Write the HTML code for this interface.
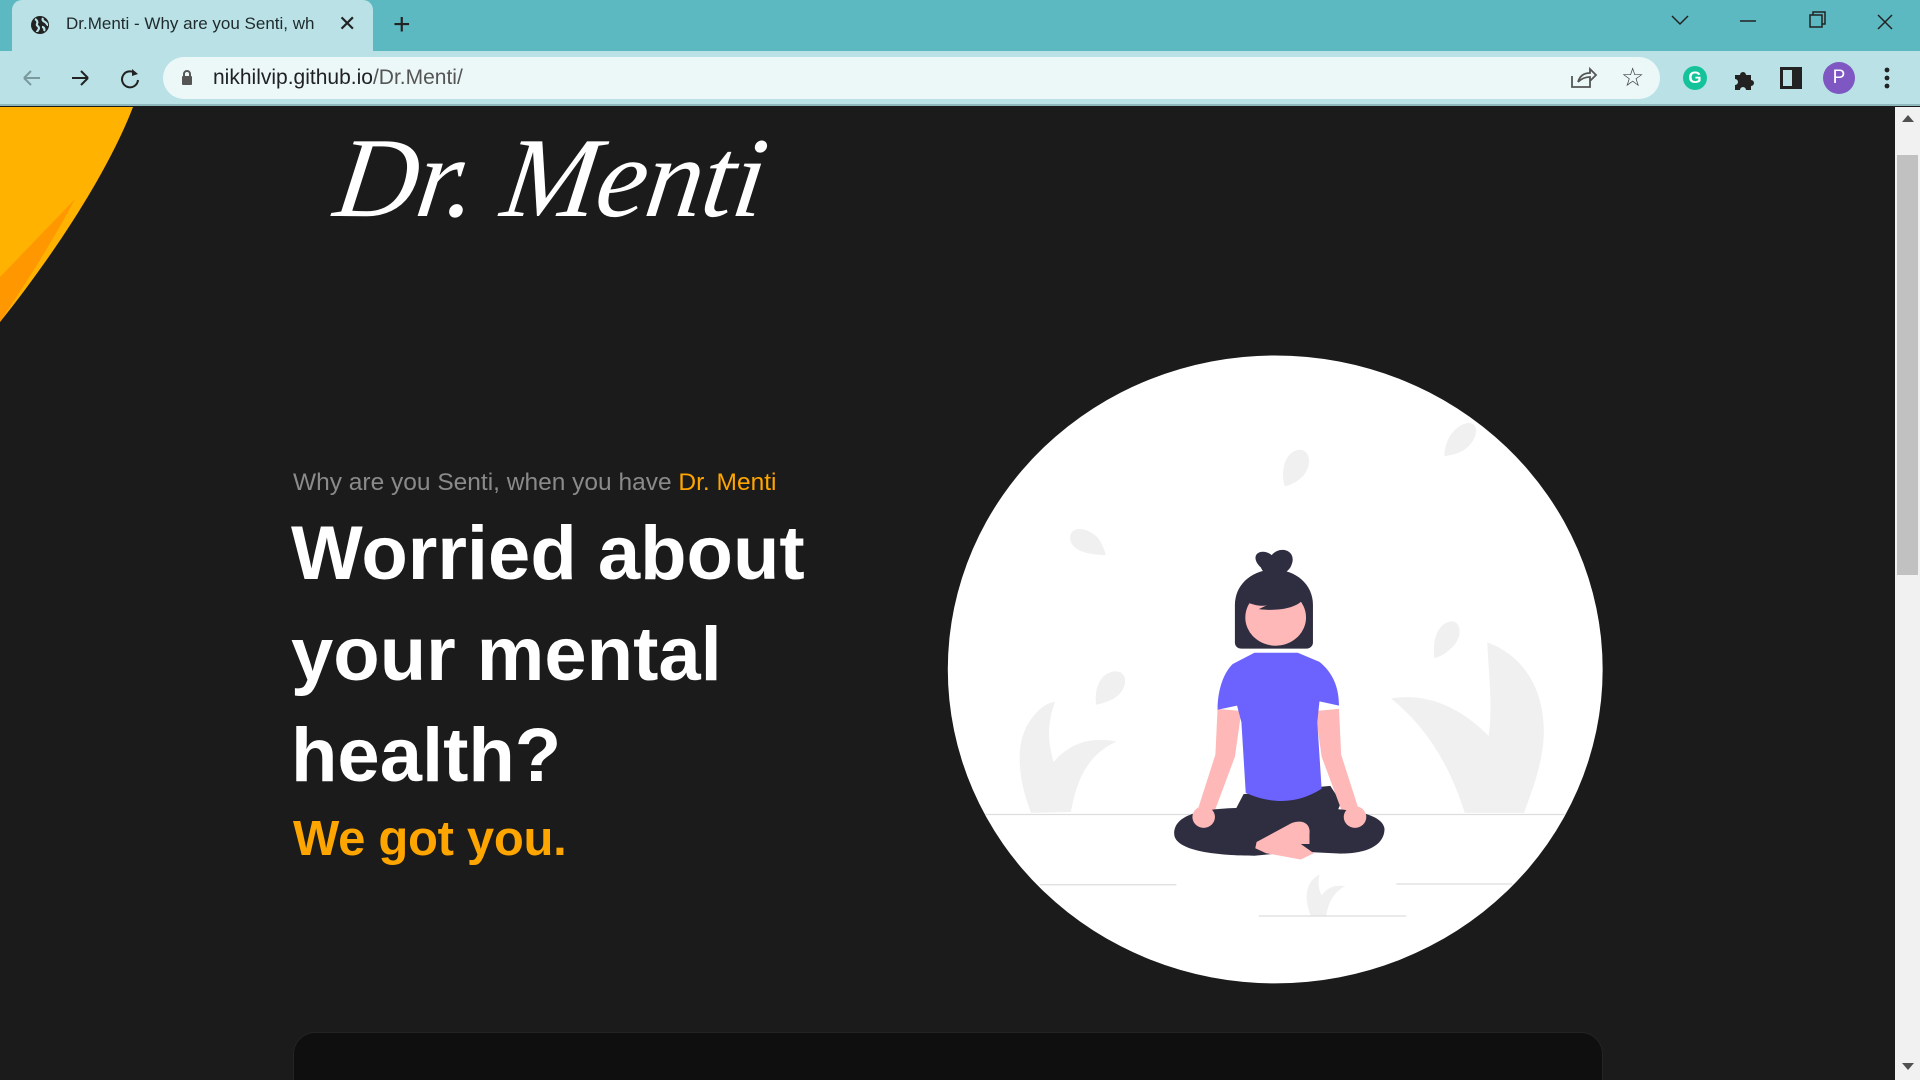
<!DOCTYPE html>
<html><head><meta charset="utf-8"><style>
*{margin:0;padding:0;box-sizing:border-box}
html,body{width:1920px;height:1080px;overflow:hidden}
body{background:#1b1b1b;font-family:"Liberation Sans",sans-serif;position:relative}
.abs{position:absolute}
</style></head><body>
<div class="abs" style="left:0;top:0;width:1920px;height:1080px;overflow:hidden">
<div class="abs" style="left:0;top:0;width:1920px;height:51px;background:#5cb8c1"></div>
<div class="abs" style="left:12px;top:0;width:361px;height:51px;background:#b9e1e6;border-radius:10px 10px 0 0"></div>
<svg class="abs" style="left:30px;top:15px" width="20" height="20" viewBox="0 0 20 20"><circle cx="10" cy="10" r="9" fill="#222"/><path d="M5 4c2 1 3 3 2 5s2 2 2 4-2 3-2 4M13 3c-1 2 0 3 2 4s2 3 3 3M12 12c2 0 3 2 2 4" stroke="#b9e1e6" stroke-width="2.2" fill="none"/></svg>
<div class="abs" style="left:66px;top:14px;font-size:17px;color:#1f2a2c;white-space:nowrap;width:262px;overflow:hidden">Dr.Menti - Why are you Senti, wh</div>
<div class="abs" style="left:338px;top:11px;font-size:22px;color:#222">✕</div>
<div class="abs" style="left:393px;top:8px;font-size:30px;color:#222">+</div>
<svg class="abs" style="left:1560px;top:0" width="360" height="51"><path d="M112 16l8 8 8-8M180 21h16M250 15h12v12h-12zM253 15v-3h12v12h-3M318 15l14 14M332 15l-14 14" stroke="#222" stroke-width="1.5" fill="none"/></svg>
<div class="abs" style="left:0;top:51px;width:1920px;height:55px;background:#b9e1e6;border-bottom:2px solid #8fb8bc"></div>
<svg class="abs" style="left:20px;top:66px" width="130" height="24"><path d="M4 12h16M4 12l7-7M4 12l7 7" stroke="#7a9a9e" stroke-width="2" fill="none"/><path d="M52 12h16M68 12l-7-7M68 12l-7 7" stroke="#222" stroke-width="2" fill="none"/><path d="M116 8a8 8 0 1 0 2 6" stroke="#222" stroke-width="2" fill="none"/><path d="M112 3l6 5-6 2z" fill="#222"/></svg>
<div class="abs" style="left:163px;top:57px;width:1497px;height:42px;background:#ecf8f8;border-radius:21px"></div>
<svg class="abs" style="left:181px;top:69px" width="12" height="16"><rect x="1" y="7" width="10" height="9" rx="1" fill="#555"/><path d="M3 7V5a3 3 0 0 1 6 0v2" stroke="#555" stroke-width="2" fill="none"/></svg>
<div class="abs" style="left:213px;top:66px;font-size:21px;color:#202124">nikhilvip.github.io<span style="color:#555">/Dr.Menti/</span></div>
<svg class="abs" style="left:1570px;top:66px" width="50" height="24"><path d="M2 10v11h18v-6M8 16c2-7 7-9 12-9V3l6 6-6 6v-4c-5 0-9 2-12 5" stroke="#555" stroke-width="1.8" fill="none"/></svg>
<div class="abs" style="left:1621px;top:62px;font-size:26px;color:#444">☆</div>
<div class="abs" style="left:1683px;top:66px;width:24px;height:24px;border-radius:50%;background:#15c39a;color:#fff;font-size:17px;font-weight:bold;text-align:center;line-height:24px">G</div>
<svg class="abs" style="left:1732px;top:67px" width="24" height="24"><path d="M3 8h5a3 3 0 1 1 6 0h5v5a3 3 0 1 1 0 6v4H14a3 3 0 1 0-6 0H3v-5a3 3 0 1 0 0-6z" fill="#222"/></svg>
<div class="abs" style="left:1780px;top:67px;width:22px;height:22px;border:3px solid #222;border-right-width:10px"></div>
<div class="abs" style="left:1823px;top:62px;width:32px;height:32px;border-radius:50%;background:#7e57c2;color:#fff;font-size:19px;text-align:center;line-height:32px">P</div>
<svg class="abs" style="left:1883px;top:67px" width="8" height="22"><circle cx="4" cy="3" r="2.4" fill="#222"/><circle cx="4" cy="11" r="2.4" fill="#222"/><circle cx="4" cy="19" r="2.4" fill="#222"/></svg>
<div class="abs" style="left:1895px;top:107px;width:25px;height:973px;background:#f1f1f1"></div>
<div class="abs" style="left:1897px;top:155px;width:21px;height:420px;background:#c1c1c1"></div>
<div class="abs" style="left:1902px;top:115px;width:0;height:0;border:6px solid transparent;border-bottom:7px solid #505050;border-top:0"></div>
<div class="abs" style="left:1902px;top:1063px;width:0;height:0;border:6px solid transparent;border-top:7px solid #505050;border-bottom:0"></div>
<svg class="abs" style="left:0;top:107px" width="140" height="220"><path d="M0 0H133C110 60 60 140 0 215z" fill="#ffb300"/><path d="M0 170L75 92C55 130 30 170 0 215z" fill="#ff9800"/></svg>
<div class="abs" style="left:337px;top:112px;font-family:'Liberation Serif',serif;font-style:italic;font-size:114px;color:#fff;letter-spacing:-1px;transform:skewX(-8deg);white-space:nowrap">Dr. Menti</div>
<div class="abs" style="left:293px;top:469px;font-size:24.5px;color:#8a8a8a;white-space:nowrap">Why are you Senti, when you have <span style="color:#ffa500">Dr. Menti</span></div>
<div class="abs" style="left:291px;top:503px;font-size:76px;font-weight:bold;color:#fff;line-height:101px;white-space:nowrap">Worried about<br>your mental<br>health?</div>
<div class="abs" style="left:293px;top:811px;font-size:49px;font-weight:bold;color:#ffa500;letter-spacing:-0.3px">We got you.</div>
<svg class="abs" style="left:940px;top:343px" width="680" height="652" viewBox="0 0 1568 1568" preserveAspectRatio="none">
<circle cx="773" cy="785" r="755" fill="#fff"/>
<g fill="#f0f0f0">
<path d="M795 345c-10-40 0-80 30-88 30-5 35 40 10 65-15 15-30 20-40 23z"/>
<path d="M1163 272c0-40 25-75 55-80 30 0 20 45-10 65-15 10-30 13-45 15z"/>
<path d="M382 510c-40 0-80-10-82-40 0-35 45-25 65 0 10 15 15 30 17 40z"/>
<path d="M360 870c-5-40 10-75 40-80 35-5 35 40 5 62-15 10-30 15-45 18z"/>
<path d="M1140 758c-5-40 5-80 35-88 30-5 30 40 5 63-15 15-28 22-40 25z"/>
<path d="M210 1130c-30-80-40-170 0-225 20-30 40-40 55-42-20 60-15 100-3 145 40-50 90-60 145-50-60 30-90 80-105 170z"/>
<path d="M1210 1130c-30-100-80-200-170-275 80-15 160 20 225 90 10-70 0-150-3-225 80 30 135 110 130 230-5 70-25 120-45 180z"/>
<path d="M855 1378c-15-40-15-80 20-100-5 25 0 40 5 50 15-20 30-25 55-22-30 15-40 45-45 72z"/>
</g>
<g stroke="#ddd" stroke-width="3"><path d="M105 1134H1440"/><path d="M230 1303H545"/><path d="M1052 1301H1320"/><path d="M735 1378H1075"/></g>
<path d="M740 540c-30-30 0-50 25-30 20-25 60-10 45 25-5 15-25 25-35 20-15 5-30 0-35-15z" fill="#2f2e41"/>
<path d="M680 630c0-50 40-85 90-85s90 35 90 85v90c0 10-8 15-15 15H695c-8 0-15-5-15-15z" fill="#2f2e41"/>
<ellipse cx="774" cy="660" rx="70" ry="68" fill="#ffb8b8"/>
<path d="M705 622c20 10 40 12 50 8l-20 10c40 5 80 0 100-20-10-30-50-45-80-40-30 5-45 20-50 42z" fill="#2f2e41"/>
<path d="M700 1085l-20 40 40 40h180l25-60-25-40z" fill="#2f2e41"/>
<path d="M640 880l-5 110-40 130 35 15 50-140 15-110zM920 880l5 110 40 130-35 15-50-140-15-110z" fill="#ffb8b8"/>
<path d="M725 745h100l50 22c30 25 45 60 45 105l-45-10-5 50 10 160c-60 40-120 35-175 10l-10-170-10-40-45 10c0-50 15-90 35-110z" fill="#6c63ff"/>
<path d="M540 1180c0-45 60-60 150-62l75 10 75-10c90 0 180 10 185 50 0 45-50 60-100 60l-100-5-100 10c-80 0-185-10-185-53z" fill="#2f2e41"/>
<circle cx="608" cy="1140" r="26" fill="#ffb8b8"/><circle cx="957" cy="1140" r="26" fill="#ffb8b8"/>
<path d="M730 1200l80-45c25-10 45 0 42 25v25h-20l30 22-30 15-80-15-25-12z" fill="#ffb8b8"/>
</svg>
<div class="abs" style="left:293px;top:1032px;width:1310px;height:80px;background:#0f0f0f;border-radius:22px;border:1px solid #242424"></div>
</div>
</body></html>
